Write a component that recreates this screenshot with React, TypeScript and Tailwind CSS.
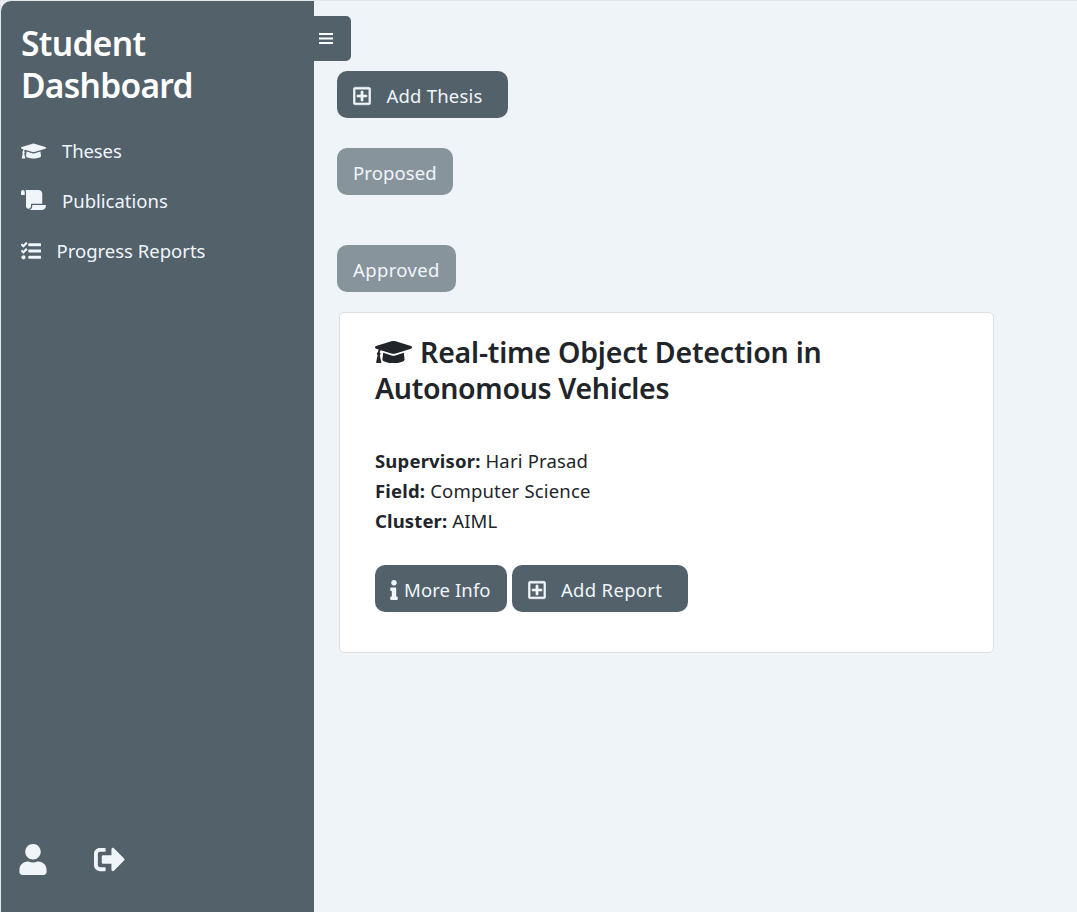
import React from "react";
import {
  FaGraduationCap,
  FaInfo,
  FaRegPlusSquare,
  FaScroll,
  FaSignOutAlt,
  FaTasks,
  FaUser,
} from "react-icons/fa";

function Sidebar() {
  return (
    <aside className="flex h-[911px] w-[313px] shrink-0 flex-col rounded-tl-[10px] bg-[#53616b] text-[#f0f5fa]">
      <h1 className="ml-5 mt-[21px] text-[33.5px] font-semibold leading-[42px] text-white">
        <span className="block tracking-[-0.65px]">Student</span>
        <span className="block tracking-[-0.7px]">Dashboard</span>
      </h1>
      <nav className="mt-5 ml-5 flex flex-col text-[18.5px] leading-[50px]">
        <a className="flex h-[50px] items-center">
          <FaGraduationCap className="-mt-px h-5 w-[25px]" />
          <span className="ml-[16px] tracking-[-0.1px]">Theses</span>
        </a>
        <a className="flex h-[50px] items-center">
          <FaScroll className="-mt-0.5 h-5 w-[25px]" />
          <span className="ml-[16px]">Publications</span>
        </a>
        <a className="flex h-[50px] items-center">
          <FaTasks className="-mt-px h-5 w-5 stroke-current stroke-[12]" />
          <span className="ml-[15.5px]">Progress Reports</span>
        </a>
      </nav>
      <div className="mt-auto mb-[37px] ml-[18px] flex items-center">
        <FaUser className="h-[31px] w-[28px]" />
        <FaSignOutAlt className="ml-[47px] h-[31px] w-[31px]" />
      </div>
    </aside>
  );
}

function ThesisCard() {
  return (
    <article className="mt-5 ml-[2px] h-[341px] w-[655px] rounded-[5px] border border-[#dcdfe2] bg-white pl-[35px] pt-[21px] text-[#212529]">
      <h2 className="text-[28.5px] font-semibold leading-9">
        <span className="flex items-center">
          <FaGraduationCap className="h-[30px] w-[37px]" />
          <span className="ml-[8px] tracking-[-0.2px]">Real-time Object Detection in</span>
        </span>
        <span className="block tracking-[-0.32px]">Autonomous Vehicles</span>
      </h2>
      <div className="mt-[40px] text-[18.5px] leading-[30px]">
        <p className="tracking-[0.17px]"><b className="font-bold">Supervisor:</b> Hari Prasad</p>
        <p className="tracking-[0.18px]"><b className="font-bold">Field:</b> Computer Science</p>
        <p className="tracking-[0.13px]"><b className="font-bold">Cluster:</b> AIML</p>
      </div>
      <div className="mt-[29px] flex gap-[5px] text-[18.5px] text-[#f0f5fa]">
        <button className="flex h-[47px] w-[132px] items-center rounded-[10px] bg-[#53616b] pl-[15px]">
          <FaInfo className="mt-[3px] h-5 w-[8px]" />
          <span className="ml-[6px] mt-[3px] whitespace-nowrap tracking-[0.1px]">More Info</span>
        </button>
        <button className="flex h-[47px] w-[176px] items-center rounded-[10px] bg-[#53616b] pl-4">
          <FaRegPlusSquare className="mt-0.5 h-5 w-[18px] stroke-current stroke-[14]" />
          <span className="ml-[15px] mt-[3px] whitespace-nowrap tracking-[0.3px]">Add Report</span>
        </button>
      </div>
    </article>
  );
}

export default function App() {
  return (
    <div className="h-[912px] w-[1077px] overflow-hidden border-l border-t border-[#e4e8eb] bg-[#eff4f9] font-['Noto_Sans',sans-serif]">
      <div className="flex">
        <Sidebar />
        <main className="flex flex-col items-start">
          <button className="mt-[15px] flex h-[45px] w-[37px] items-center rounded-r-[5px] bg-[#53616b] pl-[5px]">
            <svg className="h-[11px] w-[14px] fill-white" viewBox="0 0 14 11">
              <path d="M0 0h14v2H0zM0 4.5h14v2H0zM0 9h14v2H0z" />
            </svg>
          </button>
          <div className="ml-[23px] mt-[10px] flex flex-col items-start text-[18.5px] text-[#f0f5fa]">
            <button className="flex h-[47px] w-[171px] items-center rounded-[10px] bg-[#53616b] pl-4">
              <FaRegPlusSquare className="mt-0.5 h-5 w-[18px] stroke-current stroke-[14]" />
              <span className="ml-[15.5px] mt-[3px] whitespace-nowrap tracking-[0.2px]">Add Thesis</span>
            </button>
            <button className="mt-[30px] flex h-[47px] w-[116px] items-center rounded-[10px] bg-[#88949c] pl-4 pt-[3px] tracking-[0.1px]">Proposed</button>
            <button className="mt-[50px] flex h-[47px] w-[119px] items-center rounded-[10px] bg-[#88949c] pl-4 pt-[3px] tracking-[0.35px]">Approved</button>
            <ThesisCard />
          </div>
        </main>
      </div>
    </div>
  );
}
